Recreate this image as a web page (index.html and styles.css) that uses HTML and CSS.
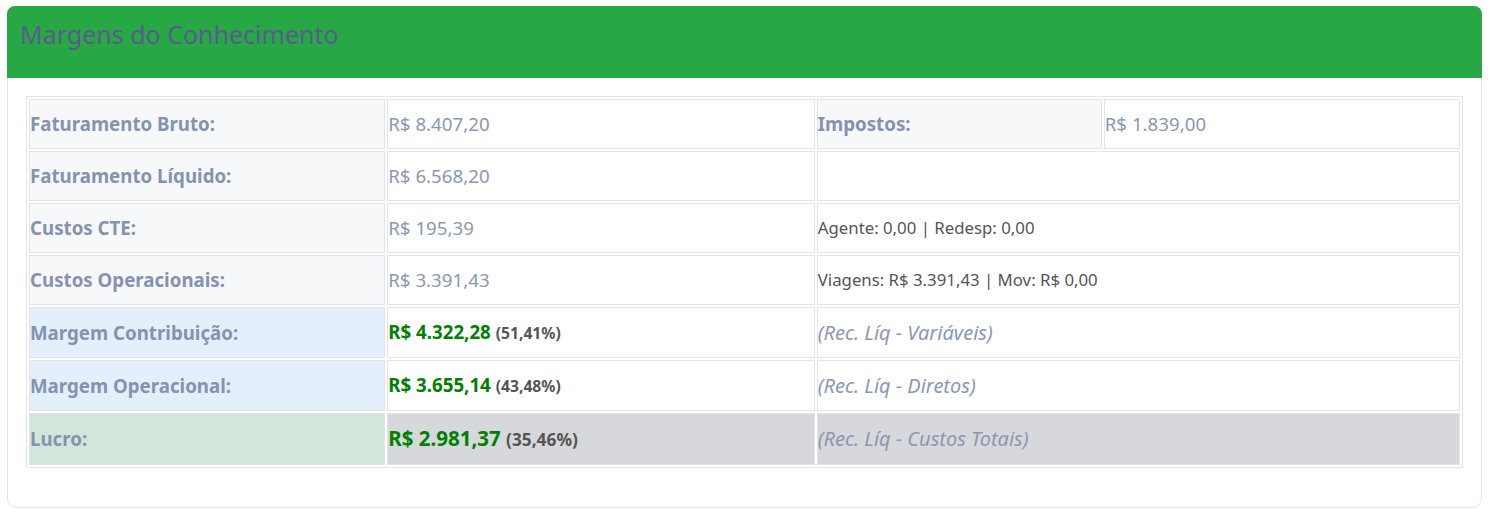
FILE: index.html
```html
<!DOCTYPE html>
<html lang="pt-BR">
<head>
<meta charset="utf-8">
<title>Margens do Conhecimento</title>
<link rel="stylesheet" href="styles.css">
</head>
<body>
<div class="card">
  <div class="card-header">
    <h4 class="card-title">Margens do Conhecimento</h4>
  </div>
  <div class="card-body">
    <table class="margins">
      <colgroup>
        <col class="c1"><col class="c2"><col class="c3"><col class="c4">
      </colgroup>
      <tbody>
        <tr>
          <th class="lbl">Faturamento Bruto:</th>
          <td class="val">R$ 8.407,20</td>
          <th class="lbl">Impostos:</th>
          <td class="val">R$ 1.839,00</td>
        </tr>
        <tr>
          <th class="lbl">Faturamento Líquido:</th>
          <td class="val">R$ 6.568,20</td>
          <td colspan="2"></td>
        </tr>
        <tr>
          <th class="lbl">Custos CTE:</th>
          <td class="val">R$ 195,39</td>
          <td colspan="2" class="note">Agente: 0,00 | Redesp: 0,00</td>
        </tr>
        <tr>
          <th class="lbl">Custos Operacionais:</th>
          <td class="val">R$ 3.391,43</td>
          <td colspan="2" class="note">Viagens: R$ 3.391,43 | Mov: R$ 0,00</td>
        </tr>
        <tr>
          <th class="lbl info">Margem Contribuição:</th>
          <td class="money"><strong class="pos">R$ 4.322,28</strong> <span class="pct">(51,41%)</span></td>
          <td colspan="2" class="formula">(Rec. Líq - Variáveis)</td>
        </tr>
        <tr>
          <th class="lbl info">Margem Operacional:</th>
          <td class="money"><strong class="pos">R$ 3.655,14</strong> <span class="pct">(43,48%)</span></td>
          <td colspan="2" class="formula">(Rec. Líq - Diretos)</td>
        </tr>
        <tr class="total">
          <th class="lbl success">Lucro:</th>
          <td class="money big"><strong class="pos">R$ 2.981,37</strong> <span class="pct">(35,46%)</span></td>
          <td colspan="2" class="formula">(Rec. Líq - Custos Totais)</td>
        </tr>
      </tbody>
    </table>
  </div>
</div>
</body>
</html>
```
FILE: styles.css
```css
html, body {
  background: #ffffff;
}
body {
  margin: 6px 6px 0 7px;
  font-family: "Noto Sans", "Open Sans", sans-serif;
  font-size: 18.7px;
}
.card {
  border: 1px solid #e2e4ec;
  border-radius: 9px;
  background: #ffffff;
}
.card-header {
  background: #28a745;
  margin: -1px -1px 0 -1px;
  border-radius: 8px 8px 0 0;
  padding: 14px 13px 29px;
}
.card-title {
  margin: 0;
  font-size: 25px;
  line-height: 29px;
  font-weight: 400;
  color: #575d8b;
}
.card-body {
  padding: 18px 18px 19px;
}
.margins {
  width: 100%;
  table-layout: fixed;
  border: 1px solid #e2e4ec;
  border-spacing: 2px;
  margin-bottom: 20px;
}
.c1 { width: 25%; }
.c2 { width: 30%; }
.c3 { width: 20%; }
.c4 { width: 25%; }
.margins th, .margins td {
  border: 1px solid #e2e4ec;
  padding: 10px 1px 10px 0;
  line-height: 28px;
  text-align: left;
  vertical-align: middle;
}
.lbl {
  background: #f7f8fa;
  color: #8592b0;
  font-weight: 700;
}
.lbl.info {
  background: #e3f0fc;
}
.lbl.success {
  background: #d3e6dc;
}
.val {
  color: #8c97b1;
}
.note {
  color: #555555;
  font-size: 16.8px;
}
.formula {
  color: #8c97b1;
  font-style: italic;
  font-size: 20px;
}
.pos {
  color: #008000;
  font-weight: 700;
}
.pct {
  color: #555555;
  font-weight: 700;
  font-size: 15.7px;
}
.total th, .total td {
  padding: 9px 1px 9px 0;
  line-height: 30px;
}
.total td {
  background: #d6d8db;
}
.big {
  font-size: 20.5px;
}
.big .pct {
  font-size: 17.3px;
}
```
